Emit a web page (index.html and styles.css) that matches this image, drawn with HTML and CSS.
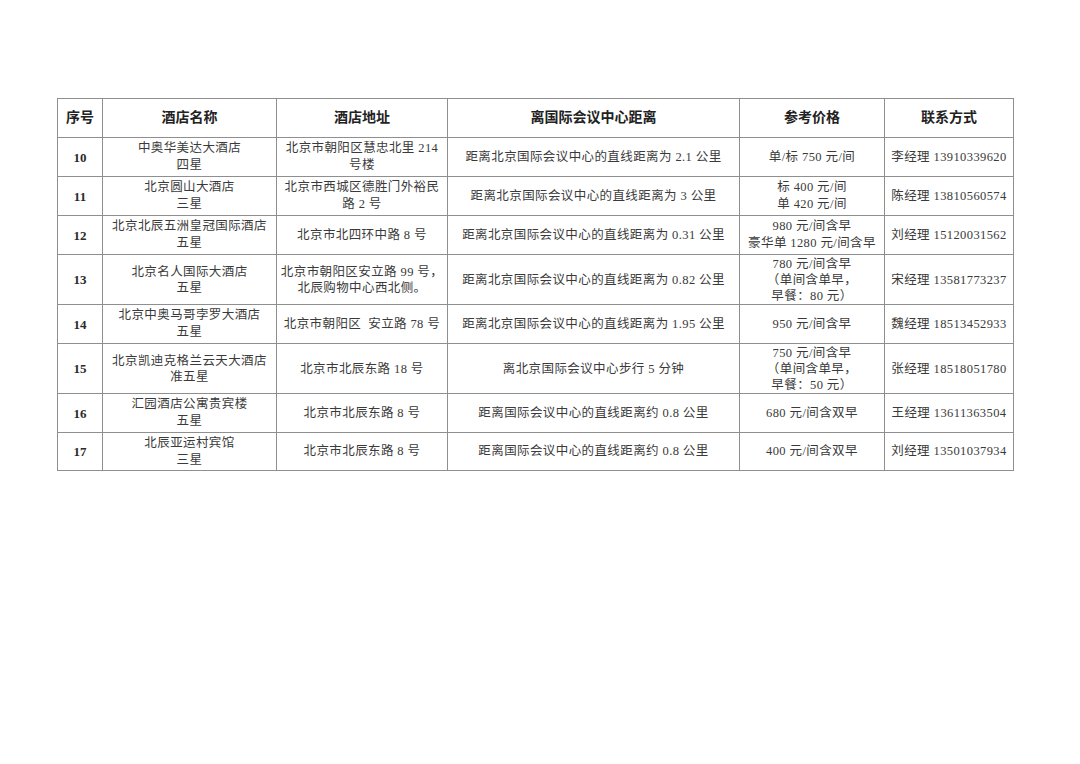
FILE: index.html
```html
<!DOCTYPE html>
<html lang="zh-CN">
<head>
<meta charset="utf-8">
<title>酒店信息</title>
<link rel="stylesheet" href="styles.css">
</head>
<body>
<main class="page">
<table class="hotels">
<colgroup>
<col class="c-no"><col class="c-name"><col class="c-addr"><col class="c-dist"><col class="c-price"><col class="c-contact">
</colgroup>
<thead>
<tr class="r-head"><th>序号</th><th>酒店名称</th><th>酒店地址</th><th>离国际会议中心距离</th><th>参考价格</th><th>联系方式</th></tr>
</thead>
<tbody>
<tr class="r-std"><td class="no">10</td><td>中奥华美达大酒店<br>四星</td><td>北京市朝阳区慧忠北里 214<br>号楼</td><td>距离北京国际会议中心的直线距离为 2.1 公里</td><td>单/标 750 元/间</td><td>李经理 13910339620</td></tr>
<tr class="r-std"><td class="no">11</td><td>北京圆山大酒店<br>三星</td><td>北京市西城区德胜门外裕民<br>路 2 号</td><td>距离北京国际会议中心的直线距离为 3 公里</td><td>标 400 元/间<br>单 420 元/间</td><td>陈经理 13810560574</td></tr>
<tr class="r-std"><td class="no">12</td><td>北京北辰五洲皇冠国际酒店<br>五星</td><td>北京市北四环中路 8 号</td><td>距离北京国际会议中心的直线距离为 0.31 公里</td><td>980 元/间含早<br>豪华单 1280 元/间含早</td><td>刘经理 15120031562</td></tr>
<tr class="r-tall"><td class="no">13</td><td>北京名人国际大酒店<br>五星</td><td>北京市朝阳区安立路 99 号，<br>北辰购物中心西北侧。</td><td>距离北京国际会议中心的直线距离为 0.82 公里</td><td>780 元/间含早<br>（单间含单早，<br>早餐：80 元）</td><td>宋经理 13581773237</td></tr>
<tr class="r-std"><td class="no">14</td><td>北京中奥马哥孛罗大酒店<br>五星</td><td>北京市朝阳区&nbsp; 安立路 78 号</td><td>距离北京国际会议中心的直线距离为 1.95 公里</td><td>950 元/间含早</td><td>魏经理 18513452933</td></tr>
<tr class="r-tall"><td class="no">15</td><td>北京凯迪克格兰云天大酒店<br>准五星</td><td>北京市北辰东路 18 号</td><td>离北京国际会议中心步行 5 分钟</td><td>750 元/间含早<br>（单间含单早，<br>早餐：50 元）</td><td>张经理 18518051780</td></tr>
<tr class="r-std"><td class="no">16</td><td>汇园酒店公寓贵宾楼<br>五星</td><td>北京市北辰东路 8 号</td><td>距离国际会议中心的直线距离约 0.8 公里</td><td>680 元/间含双早</td><td>王经理 13611363504</td></tr>
<tr class="r-last"><td class="no">17</td><td>北辰亚运村宾馆<br>三星</td><td>北京市北辰东路 8 号</td><td>距离国际会议中心的直线距离约 0.8 公里</td><td>400 元/间含双早</td><td>刘经理 13501037934</td></tr>
</tbody>
</table>
</main>
</body>
</html>
```

FILE: styles.css
```css
html, body {
  margin: 0;
  padding: 0;
  background: #ffffff;
}

.page {
  padding: 98px 0 0 57px;
  font-family: "Liberation Serif", "Noto Sans CJK SC", serif;
  color: #3a3a3a;
}

.hotels {
  border-collapse: collapse;
  table-layout: fixed;
  width: 956px;
}

.c-no { width: 45px; }
.c-name { width: 174px; }
.c-addr { width: 171px; }
.c-dist { width: 292px; }
.c-price { width: 145px; }
.c-contact { width: 129px; }

.hotels th,
.hotels td {
  border: 1px solid #8f8f8f;
  text-align: center;
  vertical-align: middle;
  padding: 0;
  white-space: nowrap;
  overflow: hidden;
}

.hotels th {
  font-size: 14px;
  font-weight: bold;
  color: #222222;
  line-height: 18px;
}

.hotels td {
  font-size: 12.5px;
  line-height: 17px;
  letter-spacing: 0.4px;
}

.hotels td.no {
  font-size: 13px;
  font-weight: bold;
  color: #2a2a2a;
  letter-spacing: 0;
}

.r-head { height: 39px; }
.r-std { height: 39px; }
.r-tall { height: 50px; }
.r-tall td { line-height: 16px; }
.r-last { height: 38px; }
```
